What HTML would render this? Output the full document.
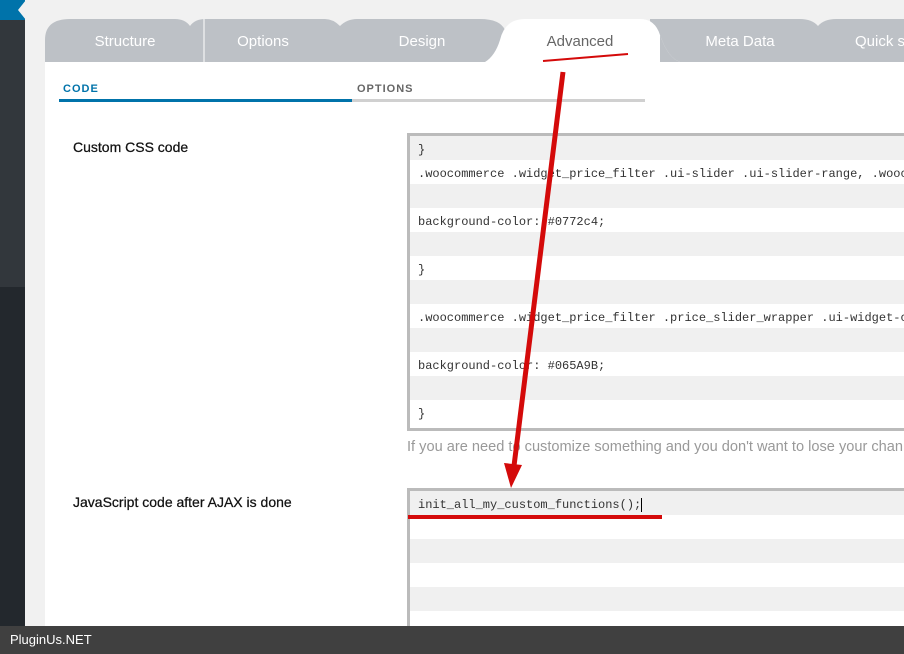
<!DOCTYPE html>
<html><head><style>
*{margin:0;padding:0;box-sizing:border-box}
body{width:904px;height:654px;overflow:hidden;background:#f1f1f1;font-family:"Liberation Sans",sans-serif;position:relative}
.abs{position:absolute}
.side1{left:0;top:0;width:25px;height:287px;background:#32373c}
.side2{left:0;top:287px;width:25px;height:367px;background:#23282d}
.blue{left:0;top:0;width:25px;height:20px;background:#0073aa}
.panel{left:45px;top:62px;width:859px;height:592px;background:#fff}
.tab{top:33px;font-size:15px;color:#fff;text-align:center;white-space:nowrap}
.sub{font-size:11px;font-weight:bold;letter-spacing:1px;top:83px}
.box{left:407px;width:520px;border:3px solid #bbb;border-right:none;background:#fff;overflow:hidden}
.row{height:24px;font-family:"Liberation Mono",monospace;font-size:12px;color:#333;padding-left:8px;line-height:28px;white-space:pre}
.row.g{background:#f0f0f0}
.lbl{left:73px;font-size:14px;color:#111;-webkit-text-stroke:0.25px #111}
.foot{left:0;top:626px;width:904px;height:28px;background:#404040;color:#fff;font-size:13px;padding:6px 0 0 10px}
</style></head><body>
<div class="abs side1"></div><div class="abs side2"></div><div class="abs blue"></div>
<svg class="abs" style="left:18px;top:0" width="8" height="20"><polygon points="8,0 8,20 0,10" fill="#f1f1f1"/></svg>
<svg class="abs" style="left:0;top:0" width="904" height="64">
<path d="M45,62 L45,40 Q45,19 70,19 L175,19 Q185,19 190,26 Q195,19 205,19 L325,19 Q333,19 340,26 Q347,19 357,19 L480,19 Q500,19 505,30 L505,62 Z" fill="#bdc1c6"/>
<line x1="204" y1="19" x2="204" y2="62" stroke="#fff" stroke-width="1"/>
<path d="M650,62 L650,19 L800,19 Q812,19 818,26 Q824,19 836,19 L904,19 L904,62 Z" fill="#bdc1c6"/>
<path d="M485,62 Q495,56 500,40 Q505,19 525,19 L640,19 Q655,19 660,35 Q668,58 680,62 Z" fill="#fff"/>
<path d="M680,62 Q668,58 660,35 L660,62 Z" fill="#bdc1c6"/>
</svg>
<div class="abs panel"></div>
<div class="abs tab" style="left:45px;width:160px">Structure</div>
<div class="abs tab" style="left:204px;width:118px">Options</div>
<div class="abs tab" style="left:342px;width:160px">Design</div>
<div class="abs tab" style="left:500px;width:160px;color:#666">Advanced</div>
<div class="abs tab" style="left:660px;width:160px">Meta Data</div>
<div class="abs tab" style="left:855px">Quick se</div>
<div class="abs sub" style="left:63px;color:#0073aa">CODE</div>
<div class="abs sub" style="left:357px;color:#666">OPTIONS</div>
<div class="abs" style="left:59px;top:99px;width:293px;height:3px;background:#0073aa"></div>
<div class="abs" style="left:352px;top:99px;width:293px;height:3px;background:#d0d0d0"></div>
<div class="abs lbl" style="top:139px">Custom CSS code</div>
<div class="abs lbl" style="top:494px">JavaScript code after AJAX is done</div>
<div class="abs box" style="top:133px;height:298px">
<div class="row g">}</div>
<div class="row">.woocommerce .widget_price_filter .ui-slider .ui-slider-range, .wooc</div>
<div class="row g"></div>
<div class="row">background-color: #0772c4;</div>
<div class="row g"></div>
<div class="row">}</div>
<div class="row g"></div>
<div class="row">.woocommerce .widget_price_filter .price_slider_wrapper .ui-widget-c</div>
<div class="row g"></div>
<div class="row">background-color: #065A9B;</div>
<div class="row g"></div>
<div class="row">}</div>
</div>
<div class="abs" style="left:407px;top:439px;font-size:14.6px;color:#999;white-space:nowrap">If you are need to customize something and you don't want to lose your chan</div>
<div class="abs box" style="top:488px;height:160px">
<div class="row g">init_all_my_custom_functions();<span style="border-left:1px solid #000"></span></div>
<div class="row"></div><div class="row g"></div><div class="row"></div><div class="row g"></div><div class="row"></div>
</div>
<svg class="abs" style="left:0;top:0" width="904" height="654">
<line x1="543" y1="61" x2="628" y2="54" stroke="#d40a0a" stroke-width="2"/>
<line x1="563" y1="72" x2="514" y2="466" stroke="#d40a0a" stroke-width="5"/>
<polygon points="504,463 522,465 511,488" fill="#d40a0a"/>
<rect x="408" y="515" width="254" height="4" fill="#d40a0a"/>
</svg>
<div class="abs foot">PluginUs.NET</div>
</body></html>
